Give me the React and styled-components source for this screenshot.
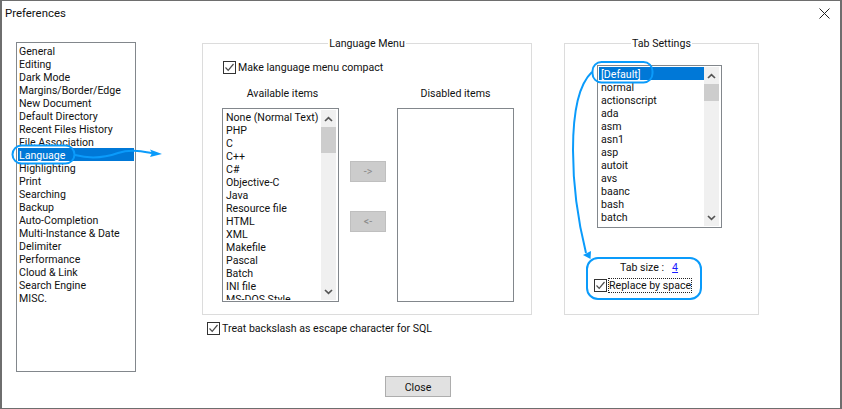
import styled, { createGlobalStyle } from "styled-components";

const categories = [
  "General", "Editing", "Dark Mode", "Margins/Border/Edge", "New Document", "Default Directory",
  "Recent Files History", "File Association", "Language", "Highlighting", "Print", "Searching",
  "Backup", "Auto-Completion", "Multi-Instance & Date", "Delimiter", "Performance", "Cloud & Link",
  "Search Engine", "MISC.",
];

const languages = [
  "None (Normal Text)", "PHP", "C", "C++", "C#", "Objective-C", "Java", "Resource file", "HTML",
  "XML", "Makefile", "Pascal", "Batch", "INI file", "MS-DOS Style",
];

const tabLangs = [
  "[Default]", "normal", "actionscript", "ada", "asm", "asn1", "asp", "autoit", "avs", "baanc",
  "bash", "batch", "blitzbasic",
];

const Check = () => (
  <CheckBox>
    <svg width="11" height="11" viewBox="0 0 11 11">
      <path d="M1.5 5.5 L4.2 8.3 L9.5 2" fill="none" stroke="#4a4a4a" strokeWidth="1.2" />
    </svg>
  </CheckBox>
);

const Scrollbar = ({ thumbTop, thumbHeight }) => (
  <ScrollTrack>
    <ScrollArrow>
      <svg width="9" height="6" viewBox="0 0 9 6">
        <path d="M1 5 L4.5 1.6 L8 5" fill="none" stroke="#555" strokeWidth="1.7" />
      </svg>
    </ScrollArrow>
    <ScrollThumb $top={thumbTop} $height={thumbHeight} />
    <ScrollArrow $bottom>
      <svg width="9" height="6" viewBox="0 0 9 6">
        <path d="M1 1 L4.5 4.4 L8 1" fill="none" stroke="#555" strokeWidth="1.7" />
      </svg>
    </ScrollArrow>
  </ScrollTrack>
);

const App = () => {
  return (
    <Window>
      <GlobalStyle />
      <TitleBar>
        <Title>Preferences</Title>
        <CloseIcon>
          <svg width="11" height="11" viewBox="0 0 11 11">
            <path d="M0.5 0.5 L10.5 10.5 M10.5 0.5 L0.5 10.5" stroke="#222" strokeWidth="1" fill="none" />
          </svg>
        </CloseIcon>
      </TitleBar>

      <Content>
        <NavList>
          {categories.map((c) => (
            <NavItem key={c} $selected={c === "Language"}>{c}</NavItem>
          ))}
        </NavList>

        <MiddleColumn>
          <Group>
            <Legend>Language Menu</Legend>
            <CheckRow $indent={20} $top={10}>
              <Check />
              <span>Make language menu compact</span>
            </CheckRow>
            <Transfer>
              <ListColumn>
                <ListLabel $shift={4}>Available items</ListLabel>
                <ListBox $width={117} $height={194}>
                  <Rows>
                    {languages.map((l) => (
                      <Row key={l}>{l}</Row>
                    ))}
                  </Rows>
                  <Scrollbar thumbTop={17} thumbHeight={26} />
                </ListBox>
              </ListColumn>
              <MoveButtons>
                <MoveButton>-&gt;</MoveButton>
                <MoveButton>&lt;-</MoveButton>
              </MoveButtons>
              <ListColumn>
                <ListLabel>Disabled items</ListLabel>
                <ListBox $width={117} $height={194} />
              </ListColumn>
            </Transfer>
          </Group>
          <CheckRow $indent={5} $top={6}>
            <Check />
            <span>Treat backslash as escape character for SQL</span>
          </CheckRow>
        </MiddleColumn>

        <RightColumn>
          <Group>
            <Legend>Tab Settings</Legend>
            <TabSettings>
              <ListBox $width={125} $height={163}>
                <Rows>
                  {tabLangs.map((l, i) => (
                    <Row key={l} $selected={i === 0}>{l}</Row>
                  ))}
                </Rows>
                <Scrollbar thumbTop={17} thumbHeight={17} />
              </ListBox>
              <TabSize>
                Tab size :<TabLink>4</TabLink>
              </TabSize>
              <CheckRow $indent={-3} $top={4}>
                <Check />
                <Focused>Replace by space</Focused>
              </CheckRow>
            </TabSettings>
          </Group>
        </RightColumn>
      </Content>

      <Footer>
        <CloseButton>Close</CloseButton>
      </Footer>

      <Annotations width="842" height="409" viewBox="0 0 842 409">
        <g fill="none" stroke="#0a9bfb" strokeWidth="2">
          <rect x="12.5" y="145.5" width="62" height="18" rx="9" />
          <path d="M75 155 C90 159 104 158 118 153 C130 149 140 151 152 153" />
          <rect x="592.5" y="62" width="60" height="20.5" rx="9" />
          <path d="M592 72 C578 85 573 115 573 150 C573 190 579 225 586 253" />
          <rect x="587" y="258" width="114" height="41" rx="11" />
        </g>
        <g fill="#0a9bfb">
          <path d="M150 149.5 L162 154 L150 157 L152 153 Z" />
          <path d="M583 255 L591 251 L590.5 259 Z" />
        </g>
      </Annotations>
    </Window>
  );
};

export default App;

const GlobalStyle = createGlobalStyle`
  html, body {
    margin: 0;
    padding: 0;
    background: #fff;
  }
  * {
    box-sizing: border-box;
  }
`;

const Window = styled.div`
  position: relative;
  width: 842px;
  height: 409px;
  overflow: hidden;
  background: #fff;
  border: 2px solid #6e6e6e;
  border-top-width: 1px;
  border-bottom-width: 1px;
  font-family: Roboto, "Liberation Sans", sans-serif;
  font-size: 10.6px;
  line-height: 13px;
  color: #111;
`;

const TitleBar = styled.div`
  display: flex;
  align-items: center;
  justify-content: space-between;
  height: 24px;
  padding: 1px 10px 0 3px;
`;

const Title = styled.div`
  font-size: 11.4px;
`;

const CloseIcon = styled.div`
  display: flex;
  width: 11px;
  height: 11px;
`;

const Content = styled.div`
  display: flex;
  align-items: flex-start;
  height: 351px;
  padding: 17px 0 0 14px;
`;

const NavList = styled.div`
  flex: none;
  width: 120px;
  height: 330px;
  padding: 1px;
  border: 1px solid #82878c;
`;

const NavItem = styled.div`
  height: 13px;
  padding: 1px 0 0 1px;
  white-space: nowrap;
  background: ${(p) => (p.$selected ? "#0078d7" : "transparent")};
  color: ${(p) => (p.$selected ? "#fff" : "#111")};
`;

const MiddleColumn = styled.div`
  flex: none;
  width: 330px;
  margin: 1px 0 0 66px;
`;

const RightColumn = styled.div`
  flex: none;
  width: 195px;
  margin: 1px 0 0 32px;
`;

const Group = styled.fieldset`
  min-width: 0;
  height: 278px;
  margin: -6px 0 0;
  padding: 0;
  border: 1px solid #dcdcdc;
`;

const Legend = styled.legend`
  margin: 0 auto;
  padding: 0 1px;
  line-height: 13px;
`;

const CheckRow = styled.div`
  display: flex;
  align-items: center;
  gap: 2px;
  height: 14px;
  margin: ${(p) => p.$top ?? 0}px 0 0 ${(p) => p.$indent}px;
  white-space: nowrap;
`;

const CheckBox = styled.span`
  flex: none;
  display: flex;
  align-items: center;
  justify-content: center;
  width: 13px;
  height: 13px;
  border: 1px solid #333;
  background: #fff;
`;

const Transfer = styled.div`
  display: flex;
  align-items: flex-start;
  margin: 12px 0 0 19px;
`;

const ListColumn = styled.div`
  display: flex;
  flex-direction: column;
  align-items: center;
`;

const ListLabel = styled.div`
  height: 13px;
  margin-bottom: 9px;
  padding: 1px 0 0 ${(p) => p.$shift ?? 0}px;
`;

const ListBox = styled.div`
  position: relative;
  display: flex;
  width: ${(p) => p.$width}px;
  height: ${(p) => p.$height}px;
  padding: 1px;
  overflow: hidden;
  background: #fff;
  border: 1px solid #82878c;
`;

const Rows = styled.div`
  flex: 1;
  min-width: 0;
  overflow: hidden;
`;

const Row = styled.div`
  height: 13px;
  padding: 1px 0 0 2px;
  white-space: nowrap;
  background: ${(p) => (p.$selected ? "#0078d7" : "transparent")};
  color: ${(p) => (p.$selected ? "#fff" : "#111")};
`;

const ScrollTrack = styled.div`
  position: relative;
  flex: none;
  width: 15px;
  margin-right: 1px;
  background: #f0f0f0;
`;

const ScrollArrow = styled.div`
  position: absolute;
  left: 0;
  ${(p) => (p.$bottom ? "bottom: 0;" : "top: 0;")}
  display: flex;
  align-items: center;
  justify-content: center;
  width: 15px;
  height: 17px;
`;

const ScrollThumb = styled.div`
  position: absolute;
  left: 0;
  top: ${(p) => p.$top}px;
  width: 15px;
  height: ${(p) => p.$height}px;
  background: #cdcdcd;
`;

const MoveButtons = styled.div`
  flex: none;
  display: flex;
  flex-direction: column;
  gap: 29px;
  width: 36px;
  margin: 75px 11px 0 11px;
`;

const MoveButton = styled.div`
  display: flex;
  align-items: center;
  justify-content: center;
  height: 21px;
  background: #cccccc;
  border: 1px solid #bfbfbf;
  color: #8a8a8a;
`;

const TabSettings = styled.div`
  display: flex;
  flex-direction: column;
  align-items: flex-start;
  padding: 15px 0 0 32px;
`;

const TabSize = styled.div`
  height: 13px;
  margin: 33px 0 0 23px;
  white-space: nowrap;
`;

const TabLink = styled.span`
  margin-left: 8px;
  color: #1a1aff;
  text-decoration: underline;
`;

const Focused = styled.span`
  outline: 1px dotted #222;
  line-height: 13px;
`;

const Footer = styled.div`
  display: flex;
  padding-left: 383px;
`;

const CloseButton = styled.div`
  display: flex;
  align-items: center;
  justify-content: center;
  width: 66px;
  height: 21px;
  padding-top: 1px;
  background: #e1e1e1;
  border: 1px solid #adadad;
`;

const Annotations = styled.svg`
  position: absolute;
  left: -2px;
  top: -1px;
  pointer-events: none;
`;
